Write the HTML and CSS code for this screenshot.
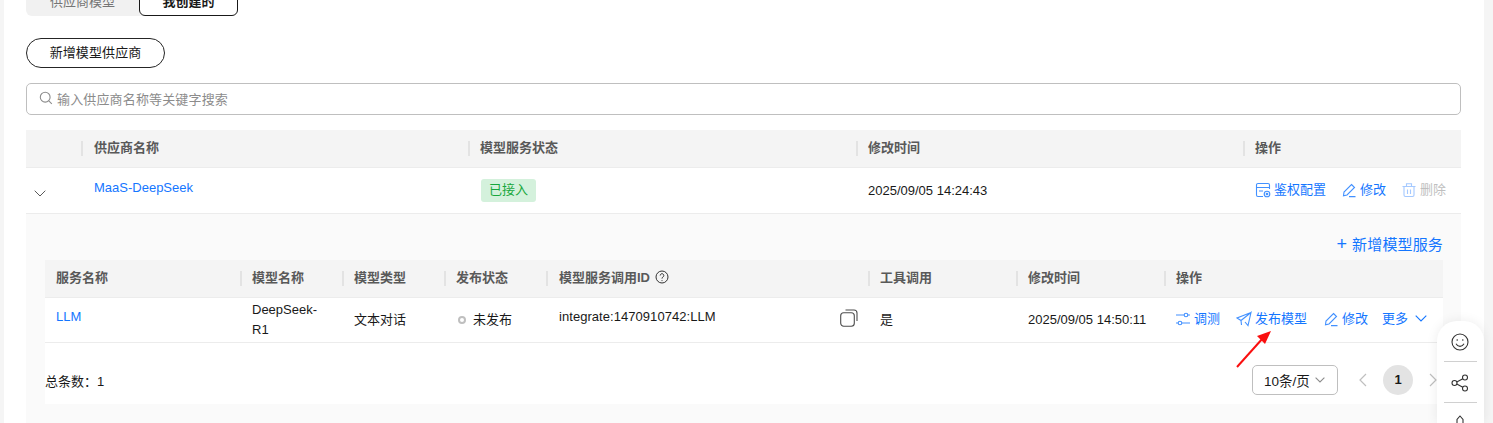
FILE: index.html
```html
<!DOCTYPE html>
<html lang="zh-CN">
<head>
<meta charset="utf-8">
<title>模型供应商</title>
<link rel="stylesheet" href="styles.css">
</head>
<body>
<main class="page">
  <div class="tabs">
    <span class="tab">供应商模型</span>
    <span class="tab tab-active">我创建的</span>
  </div>
  <button class="add-btn">新增模型供应商</button>
  <div class="search">
    <svg class="search-icon" viewBox="0 0 14 14"><circle cx="6.2" cy="6.2" r="4.9"/><path d="M9.8 9.8 L12.8 12.8"/></svg>
    <span>输入供应商名称等关键字搜索</span>
  </div>

  <div class="grid outer-grid head">
    <div class="cell"></div>
    <div class="cell th name-th">供应商名称</div>
    <div class="cell th">模型服务状态</div>
    <div class="cell th">修改时间</div>
    <div class="cell th">操作</div>
  </div>
  <div class="grid outer-grid outer-row">
    <div class="cell chev-cell">
      <svg class="chev" viewBox="0 0 12 7"><path d="M0.7 0.7 L6 6 L11.3 0.7"/></svg>
    </div>
    <div class="cell td raised name-td"><a class="link">MaaS-DeepSeek</a></div>
    <div class="cell td"><span class="badge">已接入</span></div>
    <div class="cell td">2025/09/05 14:24:43</div>
    <div class="cell td actions">
      <a class="link act">
        <svg class="ico" viewBox="0 0 16 16"><path d="M8 14.5H3a1.5 1.5 0 0 1-1.5-1.5V3A1.5 1.5 0 0 1 3 1.5h10A1.5 1.5 0 0 1 14.5 3v4M1.5 5.5h13M4 9h4"/><circle cx="12" cy="12" r="2.8"/><circle cx="12" cy="12" r="0.8"/></svg>鉴权配置</a>
      <a class="link act">
        <svg class="ico" viewBox="0 0 16 16"><path d="M10.5 2.5 L13.5 5.5 L6 13 L2.5 13.8 L3 10 Z M8 14.6 H14.5"/></svg>修改</a>
      <a class="act act-disabled">
        <svg class="ico" viewBox="0 0 16 16"><path d="M3 4.5V13a1.5 1.5 0 0 0 1.5 1.5h7A1.5 1.5 0 0 0 13 13V4.5M1.5 4.5h13M5.5 4V1.8h5V4M6.5 7.5v4.5M9.5 7.5v4.5"/></svg>删除</a>
    </div>
  </div>

  <section class="expanded">
    <div class="add-service"><a class="link"><span class="plus">+</span>新增模型服务</a></div>
    <div class="grid inner-grid head">
      <div class="cell th first">服务名称</div>
      <div class="cell th">模型名称</div>
      <div class="cell th">模型类型</div>
      <div class="cell th">发布状态</div>
      <div class="cell th id-th">模型服务调用ID
        <svg class="help" viewBox="0 0 14 14"><circle cx="7" cy="7" r="6"/><path d="M5.2 5.5a1.8 1.8 0 1 1 2.8 1.5c-.7.4-1 .8-1 1.6"/><path d="M7 10.2v.9"/></svg>
      </div>
      <div class="cell th">工具调用</div>
      <div class="cell th">修改时间</div>
      <div class="cell th">操作</div>
    </div>
    <div class="grid inner-grid inner-row">
      <div class="cell td first raised"><a class="link">LLM</a></div>
      <div class="cell td wrap">DeepSeek-<br>R1</div>
      <div class="cell td">文本对话</div>
      <div class="cell td status"><i class="dot"></i>未发布</div>
      <div class="cell td id-cell">
        <span class="raised-text">integrate:1470910742:LLM</span>
        <svg class="copy" viewBox="0 0 18 18"><rect x="0.7" y="3.7" width="13.6" height="13.6" rx="3"/><path d="M5.5 1h8.5a3 3 0 0 1 3 3v8"/></svg>
      </div>
      <div class="cell td">是</div>
      <div class="cell td">2025/09/05 14:50:11</div>
      <div class="cell td actions inner-actions">
        <a class="link act">
          <svg class="ico" viewBox="0 0 16 16"><path d="M1 4h8M13 4h2M1 12h2M7 12h8"/><circle cx="11" cy="4" r="1.8"/><circle cx="5" cy="12" r="1.8"/></svg>调测</a>
        <a class="link act">
          <svg class="ico" viewBox="0 0 16 16"><path d="M15 1.5 L1 7 L5 9.5 L15 1.5 L12 14.5 L9 11 M5 9.5 L5.5 14"/></svg>发布模型</a>
        <a class="link act">
          <svg class="ico" viewBox="0 0 16 16"><path d="M10.5 2.5 L13.5 5.5 L6 13 L2.5 13.8 L3 10 Z M8 14.6 H14.5"/></svg>修改</a>
        <a class="link act more">更多
          <svg class="more-chev" viewBox="0 0 12 7"><path d="M0.7 0.7 L6 6 L11.3 0.7"/></svg></a>
      </div>
    </div>
    <div class="pager">
      <span class="total">总条数：1</span>
      <div class="pager-right">
        <div class="size">10条/页
          <svg class="size-chev" viewBox="0 0 10 6"><path d="M0.6 0.6 L5 5 L9.4 0.6"/></svg>
        </div>
        <svg class="pg-arrow" viewBox="0 0 8 14"><path d="M7 1 L1 7 L7 13"/></svg>
        <span class="pg-num">1</span>
        <svg class="pg-arrow" viewBox="0 0 8 14"><path d="M1 1 L7 7 L1 13"/></svg>
      </div>
    </div>
  </section>

  <svg class="red-arrow" viewBox="0 0 36 42"><path d="M1 39 L27 10" class="red-line"/><path d="M35 3 L29 16 L21 8 Z" class="red-head"/></svg>
</main>

<aside class="float-panel">
  <svg class="fp-ico" viewBox="0 0 18 18"><circle cx="9" cy="9" r="8"/><circle cx="6.2" cy="7" r=".8" class="fp-fill"/><circle cx="11.8" cy="7" r=".8" class="fp-fill"/><path d="M5 10.8c1 1.8 2.4 2.6 4 2.6s3-.8 4-2.6"/></svg>
  <hr class="fp-line">
  <svg class="fp-ico" viewBox="0 0 18 18"><circle cx="3.5" cy="9" r="2.5"/><circle cx="14" cy="3.5" r="2.5"/><circle cx="14" cy="14.5" r="2.5"/><path d="M5.8 7.9 L11.8 4.7 M5.8 10.1 L11.8 13.3"/></svg>
  <hr class="fp-line">
  <svg class="fp-ico" viewBox="0 0 18 18"><path d="M9 1 L12 4.5 V9 H6 V4.5 Z"/></svg>
</aside>
</body>
</html>
```
FILE: styles.css
```css
* { box-sizing: border-box; }
html, body { margin: 0; height: 423px; overflow: hidden; }
body {
  background: #f5f5f5;
  font-family: "Liberation Sans", "Noto Sans CJK SC", sans-serif;
  font-size: 13px;
  color: #191919;
  position: relative;
}
.page {
  position: relative;
  margin-left: 4px;
  width: 1480px;
  height: 423px;
  background: #fff;
  padding: 0 23px 0 22px;
  overflow: hidden;
}
.tabs {
  display: flex;
  width: 212px;
  height: 33px;
  margin-top: -17px;
  background: #f1f1f1;
  border-radius: 6px;
}
.tab {
  width: 113px;
  display: flex;
  align-items: center;
  justify-content: center;
  padding-top: 2px;
  color: #757575;
  font-size: 13px;
}
.tab-active {
  width: 99px;
  background: #fff;
  border: 1px solid #191919;
  border-radius: 6px;
  color: #191919;
  font-weight: 700;
}
.add-btn {
  display: block;
  width: 139px;
  height: 30px;
  margin-top: 22px;
  background: #fff;
  border: 1px solid #252525;
  border-radius: 15px;
  font: inherit;
  letter-spacing: .1px;
  color: #191919;
  padding: 0 0 3px;
}
.search {
  display: flex;
  align-items: center;
  height: 32px;
  margin-top: 15px;
  padding: 0 0 2px 12px;
  border: 1px solid #bfbfbf;
  border-radius: 5px;
  color: #8c8c8c;
  letter-spacing: .15px;
}
.search-icon {
  width: 14px;
  height: 14px;
  margin-right: 4px;
  fill: none;
  stroke: #8c8c8c;
  stroke-width: 1.1;
}
.grid { display: grid; align-items: center; }
.outer-grid { grid-template-columns: 56px 387px 388px 387px 1fr; }
.inner-grid { grid-template-columns: 196px 102px 102px 102px 322px 148px 148px 1fr; }
.head {
  height: 38px;
  background: #f4f4f4;
  border-bottom: 1px solid #ececec;
}
.outer-grid.head { margin-top: 15px; }
.cell { padding-left: 11px; min-width: 0; }
.th {
  position: relative;
  font-weight: 700;
  color: #595959;
  line-height: 16px;
  padding-bottom: 2px;
}
.th::before {
  content: "";
  position: absolute;
  left: -1px;
  top: 1px;
  width: 2px;
  height: 15px;
  background: #e3e3e3;
}
.th.first::before { display: none; }
.name-th, .name-td, .id-th { padding-left: 12px; }
.outer-row {
  height: 46px;
  border-bottom: 1px solid #ececec;
  background: #fff;
}
.td { line-height: 20px; }
.raised { position: relative; top: -3px; }
.link { color: #1476ff; text-decoration: none; }
.chev-cell { padding-left: 8px; }
.chev {
  display: block;
  width: 12px;
  height: 7px;
  margin-top: 6px;
  fill: none;
  stroke: #595959;
  stroke-width: 1;
}
.badge {
  display: inline-block;
  height: 23px;
  line-height: 21px;
  margin-left: 1px;
  padding: 0 8px;
  background: #d4f1dc;
  color: #17a73d;
  border-radius: 3px;
}
.actions { display: flex; align-items: center; }
.act { display: inline-flex; align-items: center; margin-right: 15px; margin-top: -2px; white-space: nowrap; }
.act-disabled { color: #bfbfbf; }
.ico {
  width: 16px;
  height: 16px;
  margin-right: 3px;
  fill: none;
  stroke: #1476ff;
  opacity: .8;
  stroke-width: 1.1;
}
.act-disabled .ico { stroke: #8fbcff; }
.expanded {
  height: 209px;
  background: #fafafa;
  padding: 0 18px 0 19px;
}
.add-service {
  height: 46px;
  display: flex;
  align-items: center;
  justify-content: flex-end;
  font-size: 15px;
  padding-top: 14px;
  letter-spacing: .15px;
}
.plus { margin-right: 5px; font-size: 18px; font-weight: 500; }
.help {
  width: 14px;
  height: 14px;
  margin-left: 1px;
  vertical-align: -2px;
  fill: none;
  stroke: #333;
  stroke-width: 1;
}
.inner-row {
  height: 45px;
  background: #fff;
  border-bottom: 1px solid #ececec;
}
.wrap { line-height: 20px; }
.status { display: flex; align-items: center; }
.dot {
  width: 8px;
  height: 8px;
  margin: 0 7px 0 2px;
  border: 2px solid #bfbfbf;
  border-radius: 50%;
}
.id-cell { display: flex; align-items: center; justify-content: space-between; padding-right: 11px; }
.raised-text { position: relative; top: -3px; left: 1px; letter-spacing: .05px; }
.copy {
  width: 18px;
  height: 18px;
  margin-top: -4px;
  fill: none;
  stroke: #4d4d4d;
  stroke-width: 1.1;
}
.inner-actions { padding-left: 10px; }
.inner-actions .act { margin-right: 16px; }
.inner-actions .more { margin: -3px 0 0 -2px; }
.more-chev {
  width: 12px;
  height: 7px;
  margin-left: 7px;
  fill: none;
  stroke: #1476ff;
  stroke-width: 1.1;
}
.pager {
  height: 61px;
  background: #fff;
  display: flex;
  align-items: center;
  justify-content: space-between;
  padding-top: 13px;
}
.pager-right { display: flex; align-items: center; padding-right: 6px; }
.size {
  display: flex;
  align-items: center;
  width: 86px;
  height: 30px;
  padding-left: 11px;
  background: #fff;
  border: 1px solid #bfbfbf;
  border-radius: 5px;
  margin-right: 21px;
  font-size: 13.5px;
}
.size-chev {
  width: 10px;
  height: 6px;
  margin-left: 5px;
  fill: none;
  stroke: #8c8c8c;
  stroke-width: 1.1;
}
.pg-arrow {
  width: 8px;
  height: 14px;
  fill: none;
  stroke: #bfbfbf;
  stroke-width: 1.2;
}
.pg-num {
  width: 30px;
  height: 30px;
  margin: 0 16px;
  border-radius: 50%;
  background: #e3e3e3;
  font-weight: 700;
  text-align: center;
  line-height: 30px;
}
.red-arrow {
  position: absolute;
  left: 1232px;
  top: 328px;
  width: 36px;
  height: 42px;
}
.red-line { stroke: #fa0f0f; stroke-width: 2; fill: none; }
.red-head { fill: #fa0f0f; }
.float-panel {
  position: absolute;
  left: 1437px;
  top: 321px;
  width: 47px;
  height: 102px;
  background: #fff;
  border-radius: 20px 20px 0 0;
  box-shadow: 0 0 12px rgba(0,0,0,.08);
  display: flex;
  flex-direction: column;
  align-items: center;
  overflow: hidden;
  padding: 12px 1px 0 0;
}
.fp-ico {
  width: 18px;
  height: 18px;
  fill: none;
  stroke: #333;
  stroke-width: 1.1;
  flex: none;
}
.fp-fill { fill: #333; stroke: none; }
.fp-line {
  width: 33px;
  height: 1px;
  margin: 10px 0 12px;
  border: 0;
  background: #d0d0d0;
  flex: none;
}
```
